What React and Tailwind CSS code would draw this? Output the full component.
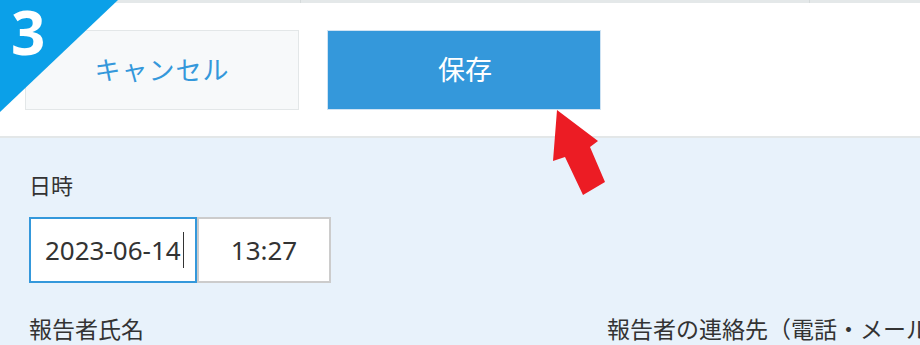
import React from 'react';

const jp = { fontFamily: '"Noto Sans", "Noto Sans CJK JP", sans-serif' };

export default function App() {
	return (
		<div className="relative w-[920px] h-[345px] overflow-hidden bg-white" style={jp}>
			{/* previous row edge */}
			<div className="flex h-[3px] bg-[#e4e8e9]">
				<div className="w-[301px] border-r border-[#d5dadb]" />
				<div className="w-[509px] border-r border-[#d5dadb]" />
				<div className="flex-1" />
			</div>

			{/* action buttons */}
			<div className="flex gap-[28px] pl-[25px] pt-[27px] pb-[26px] border-b-2 border-[#e3e7e8]">
				<button className="w-[274px] h-[80px] bg-[#f7f9fa] border border-[#e3e7e8] text-[#3498db] text-[26px] tracking-[1px]">
					キャンセル
				</button>
				<button className="w-[274px] h-[80px] bg-[#3498db] border border-[#cfe3f3] text-white text-[27px] pl-[2px]">
					保存
				</button>
			</div>

			{/* form */}
			<div className="bg-[#e8f2fb] h-full pl-[29px] pt-[33px]">
				<div className="text-[22px] leading-[28px] text-[#333]">日時</div>
				<div className="flex mt-[18px]">
					<div className="w-[168px] h-[66px] bg-white border-2 border-[#3498db] flex items-center pl-[14px] text-[26px] text-[#333]">
						<span>2023-06-14</span>
						<span className="w-[1.5px] h-[36px] bg-[#333] ml-[2px]" />
					</div>
					<div className="w-[134px] h-[66px] bg-white border-2 border-[#cccccc] flex items-center justify-center text-[26px] text-[#333]">
						13:27
					</div>
				</div>
				<div className="flex mt-[31px] text-[23px] leading-[30px] text-[#333]">
					<div className="w-[578px] shrink-0">報告者氏名</div>
					<div className="whitespace-nowrap">報告者の連絡先（電話・メール）</div>
				</div>
			</div>

			{/* step badge */}
			<svg className="absolute left-0 top-0" width="118" height="112" viewBox="0 0 118 112">
				<polygon points="0,0 118,0 0,112" fill="#0ba0e8" />
			</svg>
			<div className="absolute left-[11px] top-[2px] text-white text-[60px] font-bold leading-none" style={{ fontFamily: '"Open Sans", sans-serif' }}>
				3
			</div>

			{/* red arrow */}
			<svg className="absolute left-[540px] top-[100px]" width="80" height="100" viewBox="0 0 80 100">
				<polygon points="17,10 58,41 50,47 65,82 43,95 25,57 13,61" fill="#ec1c24" />
			</svg>
		</div>
	);
}
